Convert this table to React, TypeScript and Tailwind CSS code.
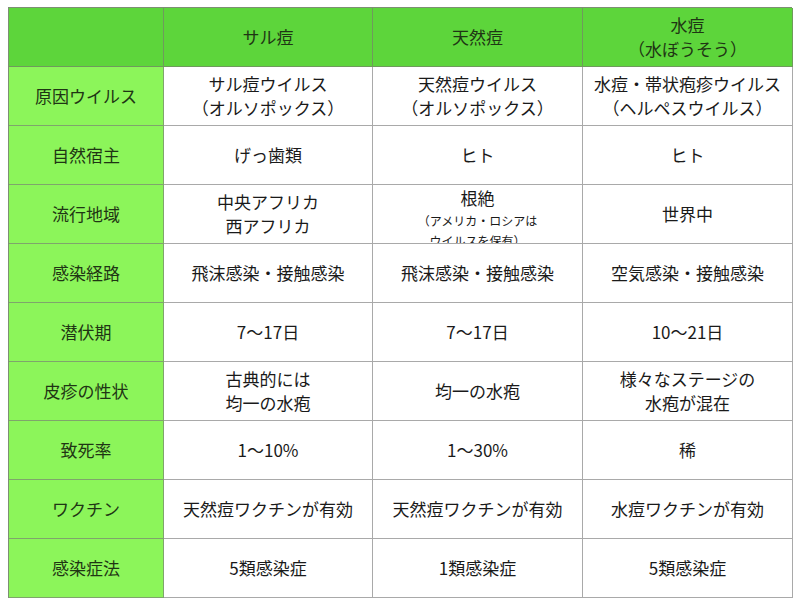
const rows: { head: string[]; cells: string[][] }[] = [
  { head: ['原因ウイルス'], cells: [['サル痘ウイルス', '（オルソポックス）'], ['天然痘ウイルス', '（オルソポックス）'], ['水痘・帯状疱疹ウイルス', '（ヘルペスウイルス）']] },
  { head: ['自然宿主'], cells: [['げっ歯類'], ['ヒト'], ['ヒト']] },
  { head: ['流行地域'], cells: [['中央アフリカ', '西アフリカ'], ['__special__'], ['世界中']] },
  { head: ['感染経路'], cells: [['飛沫感染・接触感染'], ['飛沫感染・接触感染'], ['空気感染・接触感染']] },
  { head: ['潜伏期'], cells: [['7〜17日'], ['7〜17日'], ['10〜21日']] },
  { head: ['皮疹の性状'], cells: [['古典的には', '均一の水疱'], ['均一の水疱'], ['様々なステージの', '水疱が混在']] },
  { head: ['致死率'], cells: [['1〜10%'], ['1〜30%'], ['稀']] },
  { head: ['ワクチン'], cells: [['天然痘ワクチンが有効'], ['天然痘ワクチンが有効'], ['水痘ワクチンが有効']] },
  { head: ['感染症法'], cells: [['5類感染症'], ['1類感染症'], ['5類感染症']] },
];

const header = [['サル痘'], ['天然痘'], ['水痘', '（水ぼうそう）']];

function Lines({ lines }: { lines: string[] }) {
  return (
    <>
      {lines.map((l, i) => (
        <div key={i} className="leading-[24px]">
          {l}
        </div>
      ))}
    </>
  );
}

export default function App() {
  return (
    <div
      className="w-[800px] h-[605px] bg-white pl-[8px] pt-[7px]"
      style={{ fontFamily: '"Noto Sans CJK JP", "Noto Sans", sans-serif' }}
    >
      <div className="grid grid-cols-[155px_209px_210px_210px] auto-rows-[59px] w-[784px] border-l border-t border-[#7d8f74] text-[17px]">
        <div className="bg-[#5dd53b] border-r border-b border-[#6f9a5c]" />
        {header.map((h, i) => (
          <div
            key={i}
            className="bg-[#5dd53b] border-r border-b border-[#6f9a5c] flex flex-col items-center justify-center text-center text-[#1f3514]"
          >
            <Lines lines={h} />
          </div>
        ))}
        {rows.map((r, ri) => (
          <div key={ri} className="contents">
            <div className="bg-[#8cf55a] border-r border-b border-[#7fa56c] flex flex-col items-center justify-center text-[#1f3514]">
              <Lines lines={r.head} />
            </div>
            {r.cells.map((c, ci) =>
              c[0] === '__special__' ? (
                <div
                  key={ci}
                  className="bg-white border-r border-b border-[#a9a9a9] flex flex-col items-center overflow-hidden text-[#1a1a1a] pt-[1px]"
                >
                  <div className="leading-[24px]">根絶</div>
                  <div className="text-[12px] leading-[20px] mt-[1px]">（アメリカ・ロシアは</div>
                  <div className="text-[12px] leading-[20px]">ウイルスを保有）</div>
                </div>
              ) : (
                <div
                  key={ci}
                  className="bg-white border-r border-b border-[#a9a9a9] flex flex-col items-center justify-center text-center text-[#1a1a1a]"
                >
                  <Lines lines={c} />
                </div>
              )
            )}
          </div>
        ))}
      </div>
    </div>
  );
}
